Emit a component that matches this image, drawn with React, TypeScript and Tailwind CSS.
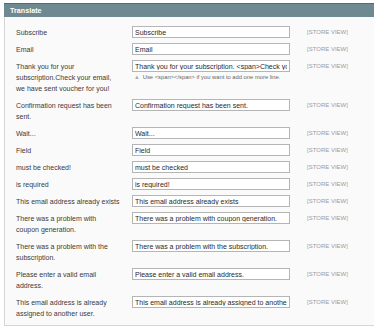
import React from "react";

type Row = { label: string[]; value: string; hint?: boolean };

const rows: Row[] = [
  { label: ["Subscribe"], value: "Subscribe" },
  { label: ["Email"], value: "Email" },
  {
    label: ["Thank you for your", "subscription.Check your email,", "we have sent voucher for you!"],
    value: "Thank you for your subscription. <span>Check your email, we have sent voucher for you!</span>",
    hint: true,
  },
  { label: ["Confirmation request has been", "sent."], value: "Confirmation request has been sent." },
  { label: ["Wait..."], value: "Wait..." },
  { label: ["Field"], value: "Field" },
  { label: ["must be checked!"], value: "must be checked" },
  { label: ["is required"], value: "is required!" },
  { label: ["This email address already exists"], value: "This email address already exists" },
  { label: ["There was a problem with", "coupon generation."], value: "There was a problem with coupon generation." },
  { label: ["There was a problem with the", "subscription."], value: "There was a problem with the subscription." },
  { label: ["Please enter a valid email", "address."], value: "Please enter a valid email address." },
  { label: ["This email address is already", "assigned to another user."], value: "This email address is already assigned to another user." },
];

export default function App() {
  return (
    <div className="w-[374px] h-[328px] overflow-hidden bg-white pt-[3px] pl-[4px] font-['Liberation_Sans',Arial,sans-serif]">
      <div className="w-[380px] h-[14px] bg-[#6f8992] border-t border-[#526b74] pl-[6px] text-[7.2px] leading-[13px] font-bold text-white">
        Translate
      </div>
      <div className="w-[380px] bg-[#fafafa] border-l border-b border-[#d6d6d6] pt-[7px] pb-[3px]">
        {rows.map((r, i) => (
          <div key={i} className="flex items-start py-[3px]">
            <div className="w-[127px] shrink-0 pl-[11px] text-[7px] leading-[11px] text-[#3a3a3a] whitespace-nowrap">
              {r.label.map((l, j) => (
                <div key={j}>{l}</div>
              ))}
            </div>
            <div className="w-[158px] shrink-0 mt-[-1px]">
              <input
                readOnly
                value={r.value}
                className="block w-[158px] h-[12px] bg-white border border-[#b5b5b5] px-[2px] text-[7px] leading-[10px] text-[#2a2a2a] outline-none font-['Liberation_Sans',Arial,sans-serif]"
              />
              {r.hint && (
                <div className="mt-[1px] pl-[2px] text-[5.8px] leading-[8px] text-[#666] whitespace-nowrap">
                  <span className="text-[#aaa] mr-[3px]">▲</span>
                  Use &lt;span&gt;&lt;/span&gt; if you want to add one more line.
                </div>
              )}
            </div>
            <div className="pl-[17px] text-[6px] leading-[11px] text-[#9a9a9a] whitespace-nowrap">[STORE VIEW]</div>
          </div>
        ))}
      </div>
    </div>
  );
}
